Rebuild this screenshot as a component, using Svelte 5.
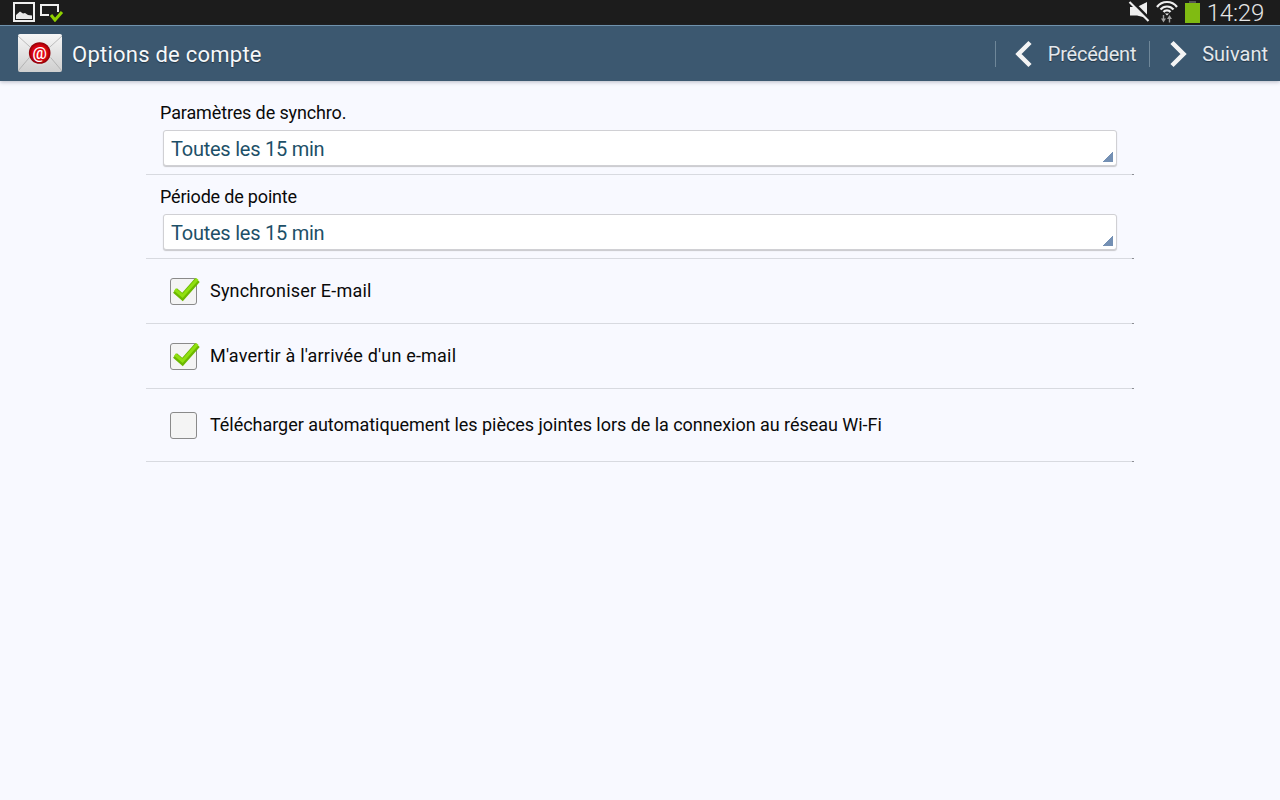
<script>
  const spinners = [
    { label: 'Paramètres de synchro.', value: 'Toutes les 15 min', cls: 'tight' },
    { label: 'Période de pointe', value: 'Toutes les 15 min', cls: 'tighter' }
  ];
  const checks = [
    { label: 'Synchroniser E-mail', checked: true, cls: 'wide' },
    { label: "M'avertir à l'arrivée d'un e-mail", checked: true, cls: 'wide' },
    { label: 'Télécharger automatiquement les pièces jointes lors de la connexion au réseau Wi-Fi', checked: false, cls: 'long' }
  ];
</script>

<div class="screen">
  <div class="status">
    <div class="status-left">
      <svg width="22" height="20" viewBox="0 0 22 20">
        <rect x="1" y="1" width="20" height="18" fill="#1c1c1c" stroke="#eee" stroke-width="2" />
        <path d="M3 17 V13 L7 9.500 L10 11.500 L12 11 L15 13 L19 13.500 V17 Z" fill="#e8e8e8" />
      </svg>
      <svg width="24" height="20" viewBox="0 0 24 20">
        <path d="M9 13 H1 V3 H18 V10" fill="none" stroke="#eee" stroke-width="2" />
        <path d="M11 13 L15 18 L22 10" fill="none" stroke="#8fd000" stroke-width="3" />
      </svg>
    </div>
    <div class="status-right">
      <svg width="22" height="24" viewBox="0 0 22 24">
        <path d="M2 7 H9 L19 2 V18 L9 15.500 H2 Z" fill="#eee" />
        <path d="M3.500 1 L22.500 20" stroke="#1c1c1c" stroke-width="3" />
        <path d="M1.500 2 L20.500 21" stroke="#eee" stroke-width="2.200" />
      </svg>
      <svg width="22" height="24" viewBox="0 0 22 24">
        <path d="M1 7 A12.500 12.500 0 0 1 21 7 M4.500 9.500 A8.500 8.500 0 0 1 17.500 9.500 M7.500 12 A4.500 4.500 0 0 1 14.500 12" fill="none" stroke="#eee" stroke-width="2.200" />
        <path d="M9 13.500 H13 L11 15.500 Z" fill="#eee" />
        <path d="M6.800 15 H8.200 V18.500 H10 L7.500 22.500 L5 18.500 H6.800 Z M12.800 22.500 H14.200 V19 H16 L13.500 15 L11 19 H12.800 Z" fill="#a0a0a0" />
      </svg>
      <div class="battery"></div>
      <span class="clock">14:29</span>
    </div>
  </div>

  <header class="bar">
    <div class="bar-title">
      <svg class="mail" width="44" height="38" viewBox="0 0 44 38">
        <defs>
          <linearGradient id="env" x1="0" y1="0" x2="0" y2="1">
            <stop offset="0" stop-color="#f6f6f6" />
            <stop offset="1" stop-color="#cfcfcf" />
          </linearGradient>
          <radialGradient id="seal" cx="0.5" cy="0.5" r="0.5">
            <stop offset="0" stop-color="#f00c14" />
            <stop offset="0.7" stop-color="#d80410" />
            <stop offset="1" stop-color="#8c0006" />
          </radialGradient>
        </defs>
        <rect width="44" height="38" rx="2" fill="url(#env)" />
        <path d="M0 2 L22 22 L44 2" fill="none" stroke="#bcbcbc" />
        <path d="M0 37 L16 18 M44 37 L28 18" fill="none" stroke="#b4b4b4" />
        <circle cx="21.700" cy="20" r="11.500" fill="#dcdcdc" />
        <circle cx="21.700" cy="19" r="10.800" fill="url(#seal)" />
        <text x="21.700" y="24.500" text-anchor="middle" class="at">@</text>
      </svg>
      <h1>Options de compte</h1>
    </div>
    <nav>
      <span class="sep"></span>
      <button class="prev">
        <svg width="20" height="28" viewBox="0 0 20 28"><path d="M16 2.500 L4.500 14 L16 25.500" fill="none" stroke="#f4f4f4" stroke-width="4.500" /></svg>
        <span>Précédent</span>
      </button>
      <span class="sep"></span>
      <button>
        <svg width="20" height="28" viewBox="0 0 20 28"><path d="M4 2.500 L15.500 14 L4 25.500" fill="none" stroke="#f4f4f4" stroke-width="4.500" /></svg>
        <span>Suivant</span>
      </button>
    </nav>
  </header>

  <main>
    {#each spinners as s}
      <div class="row spin-row">
        <div class="spin-label {s.cls}">{s.label}</div>
        <div class="spinner">
          <span>{s.value}</span>
          <i class="corner"></i>
        </div>
      </div>
    {/each}
    {#each checks as c}
      <div class="row check-row {c.cls}">
        <div class="box">
          {#if c.checked}
            <svg width="32" height="28" viewBox="0 0 32 28">
              <path d="M5 14.500 L12.500 21 L27.500 4" fill="none" stroke="#6cb800" stroke-width="6" />
              <path d="M5 13.500 L12.500 20 L27.500 3" fill="none" stroke="#90e010" stroke-width="3" />
            </svg>
          {/if}
        </div>
        <span>{c.label}</span>
      </div>
    {/each}
  </main>
</div>

<style>
  :global(body) {
    margin: 0;
    background: #f8f9ff;
  }
  .screen {
    width: 1280px;
    height: 800px;
    overflow: hidden;
    font-family: Roboto, "Liberation Sans", sans-serif;
    background: #f8f9ff;
  }
  .status {
    height: 25px;
    background: #1c1c1c;
    display: flex;
    justify-content: space-between;
  }
  .status-left {
    display: flex;
    gap: 5px;
    padding: 2px 0 0 13px;
    align-items: flex-start;
  }
  .status-right {
    display: flex;
    align-items: flex-start;
    gap: 6px;
    padding-right: 16px;
  }
  .battery {
    width: 15px;
    height: 20px;
    margin: 3px 1px 0;
    background: #80bb12;
    position: relative;
  }
  .battery::before {
    content: '';
    position: absolute;
    left: 4px;
    top: -2px;
    width: 7px;
    height: 2px;
    background: #555;
  }
  .clock {
    color: #e6e6e6;
    font-size: 24px;
    font-weight: 300;
    letter-spacing: -0.2px;
    line-height: 26px;
    height: 25px;
  }
  .bar {
    height: 56px;
    box-sizing: border-box;
    border-top: 1px solid #6f92ac;
    background: #3c5870;
    display: flex;
    align-items: center;
    justify-content: space-between;
    box-shadow: 0 1px 4px rgba(60, 70, 90, 0.35);
    position: relative;
  }
  .bar-title {
    display: flex;
    align-items: center;
    gap: 10px;
    padding-left: 18px;
  }
  .mail {
    margin-top: -1px;
  }
  .at {
    font-family: Roboto, sans-serif;
    font-size: 16px;
    font-weight: 500;
    fill: #fff;
  }
  h1 {
    margin: 2px 0 0;
    font-size: 22px;
    font-weight: 400;
    letter-spacing: 0.24px;
    color: #f6f8fa;
    text-shadow: 0 1px 1px rgba(0, 0, 0, 0.4);
  }
  nav {
    display: flex;
    align-items: center;
  }
  .sep {
    width: 1px;
    height: 26px;
    background: #6f8799;
  }
  button {
    all: unset;
    display: flex;
    align-items: center;
    gap: 14px;
    padding: 0 12px 0 18px;
    color: #e4e8ec;
    font-size: 20px;
    text-shadow: 0 1px 1px rgba(0, 0, 0, 0.4);
  }
  button span {
    margin-top: 1px;
  }
  .prev {
    padding-right: 13px;
    letter-spacing: -0.22px;
  }
  main {
    width: 988px;
    margin-left: 146px;
  }
  .row {
    box-sizing: border-box;
    border-bottom: 1px solid #d8dae0;
    position: relative;
  }
  .row::after {
    content: '';
    position: absolute;
    right: 0;
    bottom: -1px;
    width: 2px;
    height: 1px;
    background: #8c8e94;
  }
  .spin-row {
    height: 84px;
    padding-top: 11px;
  }
  .spin-row:first-child {
    height: 94px;
    padding-top: 21px;
  }
  .spin-label {
    margin-left: 14px;
    font-size: 18px;
    line-height: 21px;
    color: #0a0a0a;
  }
  .tight {
    letter-spacing: -0.13px;
  }
  .tighter {
    letter-spacing: -0.18px;
  }
  .spinner {
    margin: 7px 0 0 17px;
    width: 954px;
    height: 36px;
    box-sizing: border-box;
    background: #fff;
    border: 1px solid #d0d0d4;
    border-radius: 3px;
    box-shadow: 0 1px 1px #c8c8cc;
    padding: 1px 0 0 7px;
    display: flex;
    align-items: center;
    position: relative;
    font-size: 20px;
    letter-spacing: -0.24px;
    color: #1d5068;
  }
  .corner {
    position: absolute;
    right: 3px;
    bottom: 3px;
    width: 11px;
    height: 11px;
    background: linear-gradient(135deg, transparent 50%, #7490b4 50%);
  }
  .check-row {
    height: 65px;
    display: flex;
    align-items: center;
    gap: 13px;
    padding-left: 24px;
    font-size: 18px;
    color: #0a0a0a;
  }
  .check-row span {
    margin-bottom: 2px;
  }
  .wide {
    letter-spacing: 0.19px;
  }
  .long {
    height: 73px;
    letter-spacing: -0.035px;
  }
  .box {
    width: 27px;
    height: 27px;
    box-sizing: border-box;
    border: 1px solid #8a8a8a;
    border-radius: 3px;
    background: #f4f4f4;
    position: relative;
  }
  .box svg {
    position: absolute;
    left: -1px;
    top: -3px;
  }
</style>
